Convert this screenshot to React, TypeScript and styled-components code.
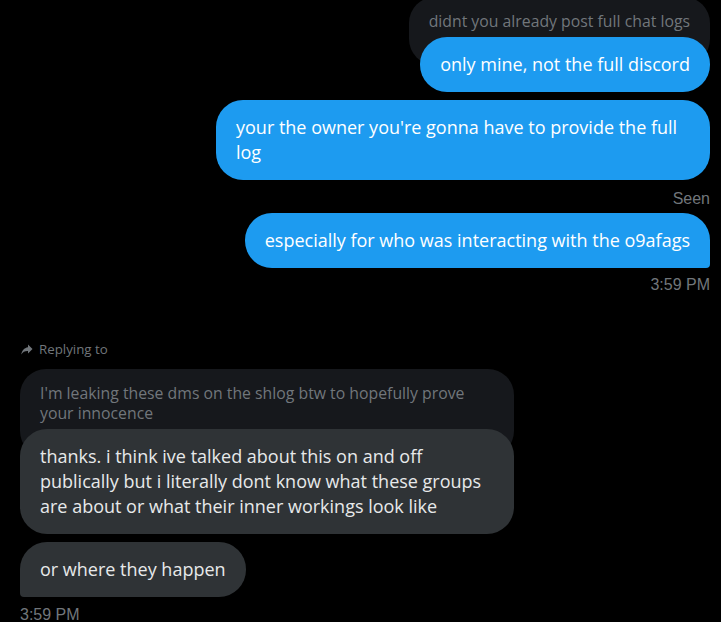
import React from "react";
import styled, { createGlobalStyle } from "styled-components";

const GlobalStyle = createGlobalStyle`
  html, body { margin: 0; padding: 0; background: #000; }
  * { box-sizing: border-box; }
`;

const Page = styled.div`
  width: 721px;
  height: 622px;
  overflow: hidden;
  background: #000;
  padding: 0 11px 0 20px;
  display: flex;
  flex-direction: column;
  font-family: "Open Sans", "Noto Sans", sans-serif;
`;

const Group = styled.div<{ $side: "left" | "right"; $top?: number }>`
  display: flex;
  flex-direction: column;
  align-items: ${(p) => (p.$side === "right" ? "flex-end" : "flex-start")};
  margin-top: ${(p) => p.$top ?? 0}px;
`;

const Message = styled.div<{ $side: "left" | "right"; $top?: number }>`
  display: flex;
  flex-direction: column;
  align-items: ${(p) => (p.$side === "right" ? "flex-end" : "flex-start")};
  max-width: 494px;
  margin-top: ${(p) => p.$top ?? 0}px;
`;

const QuoteBox = styled.div`
  background: #16181c;
  color: #71767b;
  font-size: 15.8px;
  line-height: 20px;
  padding: 14px 20px 34px;
  border-radius: 26px;
  max-width: 494px;
`;

const Bubble = styled.div<{ $side: "left" | "right"; $tail?: boolean; $quoted?: boolean }>`
  position: relative;
  z-index: 1;
  background: ${(p) => (p.$side === "right" ? "#1d9bf0" : "#2f3336")};
  color: ${(p) => (p.$side === "right" ? "#ffffff" : "#e7e9ea")};
  font-size: 18px;
  line-height: 25px;
  padding: 15px 20px;
  border-radius: 27px;
  ${(p) =>
    p.$tail
      ? p.$side === "right"
        ? "border-bottom-right-radius: 4px;"
        : "border-bottom-left-radius: 4px;"
      : ""}
  margin-top: ${(p) => (p.$quoted ? "-28px" : "0")};
  max-width: 494px;
`;

const Meta = styled.div<{ $top: number }>`
  font-family: "Liberation Sans", Arial, sans-serif;
  font-size: 16px;
  line-height: 18px;
  color: #71767b;
  margin-top: ${(p) => p.$top}px;
`;

const ReplyLabel = styled.div`
  display: flex;
  align-items: center;
  gap: 6px;
  height: 18px;
  color: #71767b;
  font-size: 13.3px;
  line-height: 18px;
  padding-left: 1px;
`;

const ReplyIcon = () => (
  <svg width="12" height="11" viewBox="0 0 24 22" fill="#71767b" aria-hidden="true">
    <path d="M14 1l9 9-9 9v-5.2C7.6 13.6 3.6 15.8 0.5 21 1.7 13.4 6 7.6 14 6.3V1z" />
  </svg>
);

export default function App() {
  return (
    <Page>
      <GlobalStyle />
      <Group $side="right" $top={-3}>
        <Message $side="right">
          <QuoteBox>didnt you already post full chat logs</QuoteBox>
          <Bubble $side="right" $quoted>
            only mine, not the full discord
          </Bubble>
        </Message>
        <Message $side="right" $top={8}>
          <Bubble $side="right">your the owner you're gonna have to provide the full log</Bubble>
        </Message>
        <Meta $top={10}>Seen</Meta>
        <Message $side="right" $top={5}>
          <Bubble $side="right" $tail>
            especially for who was interacting with the o9afags
          </Bubble>
        </Message>
        <Meta $top={8}>3:59 PM</Meta>
      </Group>

      <Group $side="left" $top={46}>
        <ReplyLabel>
          <ReplyIcon />
          Replying to
        </ReplyLabel>
        <Message $side="left" $top={11}>
          <QuoteBox>I'm leaking these dms on the shlog btw to hopefully prove your innocence</QuoteBox>
          <Bubble $side="left" $quoted>
            thanks. i think ive talked about this on and off publically but i literally dont know what these
            groups are about or what their inner workings look like
          </Bubble>
        </Message>
        <Message $side="left" $top={8}>
          <Bubble $side="left" $tail>
            or where they happen
          </Bubble>
        </Message>
        <Meta $top={9}>3:59 PM</Meta>
      </Group>
    </Page>
  );
}
